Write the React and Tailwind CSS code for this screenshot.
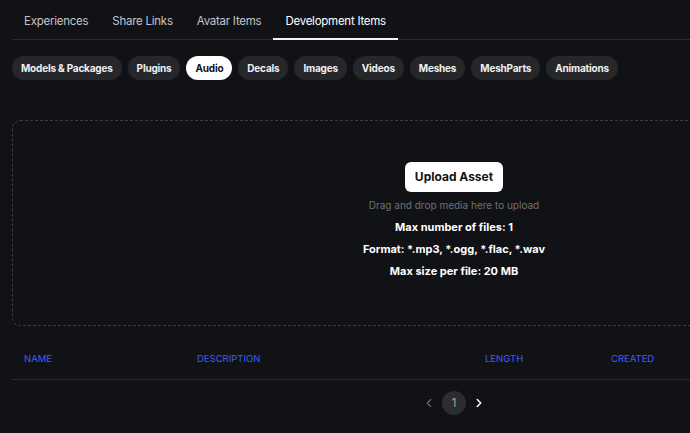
import { ChevronLeft, ChevronRight } from 'lucide-react';

const tabs = ['Experiences', 'Share Links', 'Avatar Items', 'Development Items'];
const chips = ['Models & Packages', 'Plugins', 'Audio', 'Decals', 'Images', 'Videos', 'Meshes', 'MeshParts', 'Animations'];

export default function App() {
  return (
    <div className="w-[690px] h-[433px] overflow-hidden bg-[#111216] font-['Inter',sans-serif]">
      <div className="w-[908px] px-3">
        {/* top tabs */}
        <div className="flex border-b border-[#2a2b2f] h-[40px]">
          {tabs.map((t, i) => {
            const active = i === 3;
            return (
              <div
                key={t}
                className={
                  'px-3 flex items-center text-[11.5px] tracking-[-0.25px] pt-[5px] ' +
                  (active ? 'text-white border-b-2 border-[#f2f2f2] -mb-px' : 'text-[#c3c4c8]')
                }
              >
                {t}
              </div>
            );
          })}
        </div>

        {/* category chips */}
        <div className="flex gap-[6px] mt-[16px]">
          {chips.map(c => (
            <div
              key={c}
              className={
                'h-[24px] px-[9px] rounded-full flex items-center text-[10px] font-bold tracking-[-0.2px] ' +
                (c === 'Audio' ? 'bg-white text-[#111216]' : 'bg-[#26272b] text-[#f0f0f2]')
              }
            >
              {c}
            </div>
          ))}
        </div>

        {/* drop zone */}
        <div className="mt-[40px] h-[206px] rounded-lg border border-dashed border-[#3a3b40] flex flex-col items-center justify-center pb-[4px]">
          <button className="h-[30px] px-[10px] rounded-md bg-white text-[#111216] text-[12px] font-bold">Upload Asset</button>
          <div className="mt-[6px] text-[10px] text-[#6f7075]">Drag and drop media here to upload</div>
          <div className="mt-[6px] text-[11px] font-bold text-white">Max number of files: 1</div>
          <div className="mt-[5px] text-[11px] font-bold text-white">Format: *.mp3, *.ogg, *.flac, *.wav</div>
          <div className="mt-[6px] text-[11px] font-bold text-white">Max size per file: 20 MB</div>
        </div>

        {/* table header */}
        <div className="mt-[12px] h-[42px] border-b border-[#2a2b2f] grid grid-cols-[173px_288px_126px_1fr] text-[9.5px] text-[#3a5dff] items-center pt-[2px]">
          <div className="px-3">NAME</div>
          <div className="px-3">DESCRIPTION</div>
          <div className="px-3">LENGTH</div>
          <div className="px-3">CREATED</div>
        </div>

        {/* pagination */}
        <div className="flex items-center justify-center gap-[6px] mt-[11px]">
          <ChevronLeft className="w-[14px] h-[14px] text-[#6a6b70]" strokeWidth={2} />
          <div className="w-[24px] h-[24px] rounded-full bg-[#2c2d31] flex items-center justify-center text-[12px] text-[#9fa0a6]">1</div>
          <ChevronRight className="w-[14px] h-[14px] text-white" strokeWidth={2.5} />
        </div>
      </div>
    </div>
  );
}
